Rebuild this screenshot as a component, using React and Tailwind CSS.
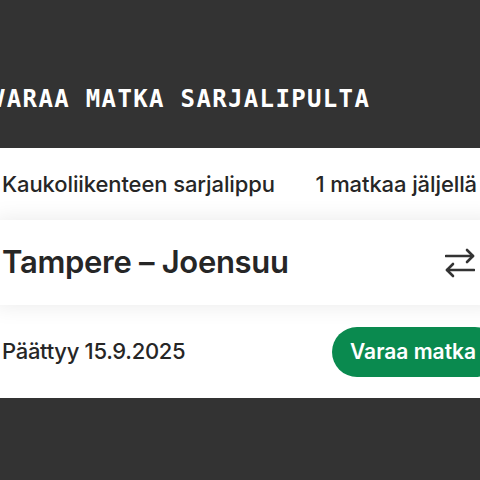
const App = () => {
  return (
    <div className="w-[480px] h-[480px] overflow-hidden bg-[#333333]">
      <div className="w-[506px] -ml-[6px] pt-[83px]">
        <h1 className="-ml-[3px] font-['DejaVu_Sans_Mono',monospace] font-bold text-[24px] leading-[32px] tracking-[1.35px] text-white">
          VARAA MATKA SARJALIPULTA
        </h1>

        <div className="mt-[33px] bg-white font-['Inter',sans-serif] text-[#262626]">
          <div className="flex justify-between items-center h-[72px] pl-[8px] pr-[23px] text-[22px] font-medium tracking-[-0.1px]">
            <span>Kaukoliikenteen sarjalippu</span>
            <span>1 matkaa jäljellä</span>
          </div>

          <div className="relative z-10 bg-white flex justify-between items-center h-[85px] pl-[8px] pr-[25px] shadow-[0_0_22px_rgba(0,0,0,0.09)]">
            <span className="text-[31px] font-semibold tracking-[-0.3px]">Tampere – Joensuu</span>
            <svg width="30" height="30" viewBox="0 0 30 30" fill="none" stroke="#333333" strokeWidth="2.6" strokeLinecap="round" strokeLinejoin="round">
              <path d="M1 8H28" />
              <path d="M22 2L28 8L22 14" />
              <path d="M2 22H29" />
              <path d="M8 16L2 22L8 28" />
            </svg>
          </div>

          <div className="flex justify-between items-center h-[93px] pl-[8px]">
            <span className="text-[22px] font-medium tracking-[-0.3px]">Päättyy 15.9.2025</span>
            <button className="h-[50px] w-[168px] rounded-full bg-[#0a8a4f] text-white text-[21px] font-semibold text-left pl-[18px]">
              Varaa matka
            </button>
          </div>
        </div>
      </div>
    </div>
  );
};

export default App;
